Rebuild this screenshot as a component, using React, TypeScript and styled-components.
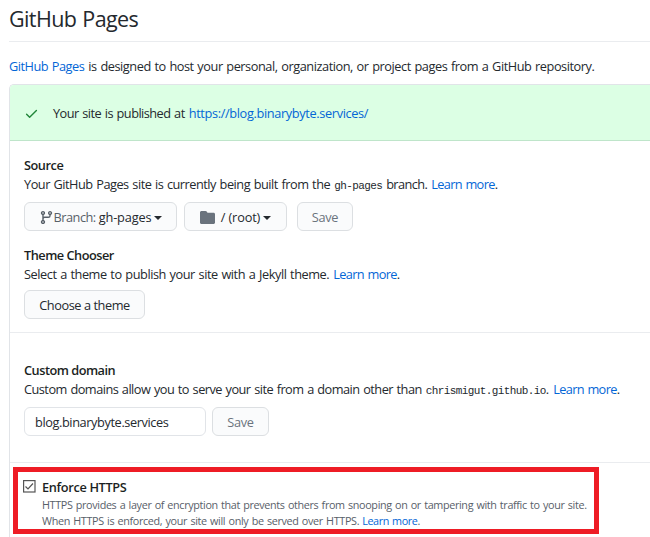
import React from "react";
import styled, { createGlobalStyle } from "styled-components";

const Global = createGlobalStyle`
  * { box-sizing: border-box; }
  body { margin: 0; background: #fff; overflow: hidden; }
`;

const Page = styled.main`
  width: 650px;
  height: 537px;
  overflow: hidden;
  padding-left: 9px;
  color: #24292e;
  font: 400 12.75px/19px "Open Sans", "Noto Sans", sans-serif;
  white-space: nowrap;
`;

const Title = styled.h1`
  height: 42px;
  margin: 0;
  padding-top: 3px;
  border-bottom: 1px solid #eaecef;
  font-size: 21.5px;
  line-height: 32px;
  font-weight: 400;
  letter-spacing: -0.6px;
  word-spacing: 1px;
`;

const Line = styled.p`
  display: flex;
  align-items: baseline;
  gap: 4px;
  height: 19px;
  margin: 0;
  word-spacing: 0.8px;
`;

const Intro = styled(Line)`
  margin-top: 15px;
`;

const Span = styled.span<{ $track?: number }>`
  letter-spacing: ${(p) => p.$track ?? -0.35}px;
`;

const Link = styled.a<{ $track?: number }>`
  color: #0366d6;
  text-decoration: none;
  letter-spacing: ${(p) => p.$track ?? -0.63}px;
`;

const Code = styled.code`
  font: 11px "Liberation Mono", monospace;
  letter-spacing: -0.6px;
`;

const Panel = styled.section`
  height: 470px;
  margin-top: 8px;
  border: 1px solid #e1e4e8;
  border-right: 0;
  border-radius: 5px 0 0 0;
  overflow: hidden;
`;

const Flash = styled.div`
  display: flex;
  align-items: center;
  height: 56px;
  padding: 2px 0 0 14px;
  background: #dcffe4;
  border-bottom: 1px solid #bfe5ca;
  color: #24292e;

  svg { margin-right: 14px; }
`;

const Block = styled.div<{ $height: number; $top: number }>`
  height: ${(p) => p.$height}px;
  padding: ${(p) => p.$top}px 0 0 14px;
  border-bottom: 1px solid #eaecef;
`;

const Heading = styled.h2<{ $track: number }>`
  height: 19px;
  margin: 0;
  color: #1b1f23;
  font-size: 12.75px;
  line-height: 19px;
  font-weight: 600;
  letter-spacing: ${(p) => p.$track}px;
`;

const Controls = styled.div<{ $top: number }>`
  display: flex;
  margin-top: ${(p) => p.$top}px;
`;

const Button = styled.button<{ $width: number; $gap?: number; $muted?: boolean }>`
  display: flex;
  align-items: center;
  justify-content: center;
  width: ${(p) => p.$width}px;
  height: 29px;
  margin: 0 0 0 ${(p) => p.$gap ?? 0}px;
  padding: 1px 0 0;
  border: 1px solid #dcdfe2;
  border-radius: 6px;
  background: #fafbfc;
  color: ${(p) => (p.$muted ? "#6a737d" : "#24292e")};
  font: inherit;
`;

const BranchLabel = styled(Span)`
  margin: 0 3px 0 0;
  color: #586069;
`;

const RootLabel = styled(Span)`
  margin-left: 6px;
`;

const Caret = styled.i`
  width: 0;
  height: 0;
  margin: 1px 0 0 3px;
  border: 4px solid transparent;
  border-top: 4px solid #24292e;
  border-bottom: 0;
`;

const DomainInput = styled.input`
  width: 182px;
  height: 29px;
  padding: 1px 10px 0;
  border: 1px solid #e1e4e8;
  border-radius: 6px;
  background: #fff;
  color: #24292e;
  font: inherit;
  letter-spacing: -0.4px;
`;

const Highlight = styled.div`
  display: flex;
  width: 586px;
  height: 67px;
  margin: 4px 0 0 3px;
  padding: 6px 0 0 5px;
  border: 5px solid #ee1c25;

  > svg { margin: 2px 6px 0 0; flex: none; }
`;

const Note = styled(Line)`
  gap: 3px;
  height: 16px;
  color: #586069;
  font-size: 10.8px;
  line-height: 16px;
`;

const CheckIcon = () => (
  <svg width="15" height="15" viewBox="0 0 16 16" fill="#22863a">
    <path d="M13.78 4.22a.75.75 0 010 1.06l-7.25 7.25a.75.75 0 01-1.06 0L2.22 9.28a.75.75 0 011.06-1.06L6 10.94l6.72-6.72a.75.75 0 011.06 0z" />
  </svg>
);

const BranchIcon = () => (
  <svg width="15" height="15" viewBox="0 0 16 16" fill="#586069">
    <path fillRule="evenodd" d="M11.75 2.5a.75.75 0 100 1.5.75.75 0 000-1.5zm-2.25.75a2.25 2.25 0 113 2.122V6A2.5 2.5 0 0110 8.5H6a1 1 0 00-1 1v1.128a2.251 2.251 0 11-1.5 0V5.372a2.25 2.25 0 111.5 0v1.836A2.492 2.492 0 016 7h4a1 1 0 001-1v-.628A2.25 2.25 0 019.5 3.25zM4.25 12a.75.75 0 100 1.5.75.75 0 000-1.5zM3.5 3.25a.75.75 0 111.5 0 .75.75 0 01-1.5 0z" />
  </svg>
);

const FolderIcon = () => (
  <svg width="15" height="13" viewBox="0 0 15 13" fill="#6a737d">
    <path d="M1.5 0h4c.5 0 .9.2 1.2.6l.8 1.1h6c.8 0 1.5.6 1.5 1.4v8.4c0 .8-.7 1.5-1.5 1.5h-12C.7 13 0 12.3 0 11.5v-10C0 .7.7 0 1.5 0z" />
  </svg>
);

const Checkbox = () => (
  <svg width="13" height="13" viewBox="0 0 13 13" fill="none" stroke="#555" role="checkbox" aria-checked="true">
    <rect x="0.6" y="0.6" width="11.4" height="11.4" strokeWidth="1.2" />
    <path d="M2.5 6.5l2.500 2.500 5-5.500" strokeWidth="1.2" />
  </svg>
);

const LearnMore = ({ track }: { track?: number }) => (
  <span>
    <Link $track={track}>Learn more</Link>.
  </span>
);

export default function App() {
  return (
    <>
      <Global />
      <Page>
        <Title>GitHub Pages</Title>
        <Intro>
          <Link $track={-0.48}>GitHub Pages</Link>
          <Span $track={-0.45}>is designed to host your personal, organization, or project pages from a GitHub repository.</Span>
        </Intro>
        <Panel>
          <Flash>
            <CheckIcon />
            <Line>
              <Span $track={-0.53}>Your site is published at</Span>
              <Link $track={-0.357}>https://blog.binarybyte.services/</Link>
            </Line>
          </Flash>
          <Block $height={192} $top={15}>
            <Heading $track={-0.46}>Source</Heading>
            <Line>
              <Span $track={-0.49}>Your GitHub Pages site is currently being built from the</Span>
              <Code>gh-pages</Code>
              <Span $track={-0.6}>branch.</Span>
              <LearnMore />
            </Line>
            <Controls $top={8}>
              <Button $width={153}>
                <BranchIcon />
                <BranchLabel $track={-0.5}>Branch:</BranchLabel>
                <Span $track={-0.15}>gh-pages</Span>
                <Caret />
              </Button>
              <Button $width={103} $gap={7}>
                <FolderIcon />
                <RootLabel $track={-0.14}>/ (root)</RootLabel>
                <Caret />
              </Button>
              <Button $width={56} $gap={10} $muted>
                <Span $track={-0.3}>Save</Span>
              </Button>
            </Controls>
            <Controls $top={15}>
              <Heading $track={-0.5}>Theme Chooser</Heading>
            </Controls>
            <Line>
              <Span $track={-0.45}>Select a theme to publish your site with a Jekyll theme.</Span>
              <LearnMore />
            </Line>
            <Controls $top={6}>
              <Button $width={121}>
                <Span $track={-0.43}>Choose a theme</Span>
              </Button>
            </Controls>
          </Block>
          <Block $height={130} $top={28}>
            <Heading $track={-0.5}>Custom domain</Heading>
            <Line>
              <Span $track={-0.52}>Custom domains allow you to serve your site from a domain other than</Span>
              <span>
                <Code>chrismigut.github.io</Code>.
              </span>
              <LearnMore />
            </Line>
            <Controls $top={8}>
              <DomainInput defaultValue="blog.binarybyte.services" />
              <Button $width={57} $gap={6} $muted>
                <Span $track={-0.3}>Save</Span>
              </Button>
            </Controls>
          </Block>
          <Highlight>
            <Checkbox />
            <div>
              <Heading $track={-0.34}>Enforce HTTPS</Heading>
              <Note>
                <Span $track={-0.35}>
                  HTTPS provides a layer of encryption that prevents others from snooping on or tampering with traffic to your site.
                </Span>
              </Note>
              <Note>
                <Span $track={-0.34}>When HTTPS is enforced, your site will only be served over HTTPS.</Span>
                <LearnMore track={-0.4} />
              </Note>
            </div>
          </Highlight>
        </Panel>
      </Page>
    </>
  );
}
